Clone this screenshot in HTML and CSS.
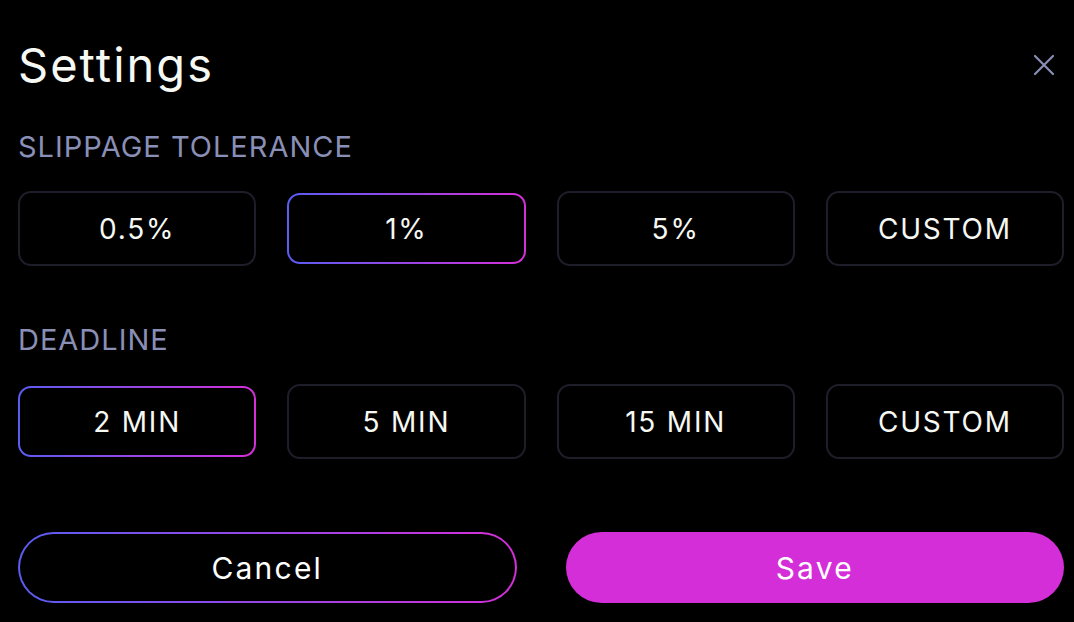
FILE: index.html
```html
<!DOCTYPE html>
<html lang="en">
  <head>
    <meta charset="UTF-8" />
    <title>Settings</title>
    <link rel="stylesheet" href="styles.css">
  </head>
  <body>
    <div class="settings">
      <div class="settings-header">
        <h1>Settings</h1>
        <button class="close-btn" type="button" aria-label="Close">
          <svg width="24" height="24" viewBox="0 0 24 24">
            <path d="M3 3 L21 21 M21 3 L3 21" stroke="#8a8fb6" stroke-width="2.2" stroke-linecap="round" />
          </svg>
        </button>
      </div>

      <!-- Slippage -->
      <div class="section">
        <div class="section-label">SLIPPAGE TOLERANCE</div>
        <div class="options">
          <button class="option">0.5%</button>
          <button class="option selected">1%</button>
          <button class="option">5%</button>
          <button class="option">CUSTOM</button>
        </div>
      </div>

      <!-- Deadline -->
      <div class="section">
        <div class="section-label">DEADLINE</div>
        <div class="options">
          <button class="option selected">2 MIN</button>
          <button class="option">5 MIN</button>
          <button class="option">15 MIN</button>
          <button class="option">CUSTOM</button>
        </div>
      </div>

      <!-- Actions -->
      <div class="actions">
        <button class="btn-cancel" type="button">Cancel</button>
        <button class="btn-save" type="button">Save</button>
      </div>
    </div>
  </body>
</html>
```

FILE: styles.css
```css
body {
  margin: 0;
  background: #000;
  font-family: Inter, "Open Sans", sans-serif;
  color: #f6f8f3;
}

.settings {
  padding: 34px 10px 0 18px;
}

.settings-header {
  display: flex;
  justify-content: space-between;
  align-items: center;
  height: 60px;
}

.settings-header h1 {
  margin: 0;
  font-size: 47px;
  font-weight: 400;
  letter-spacing: 2px;
}

.close-btn {
  background: none;
  border: none;
  padding: 0;
  margin-right: 8px;
  margin-top: 4px;
  cursor: pointer;
}

.section {
  margin-top: 36px;
}

.section + .section {
  margin-top: 57px;
}

.section-label {
  font-size: 29px;
  color: #8a8fb6;
  letter-spacing: 1px;
  line-height: 34px;
}

.option {
  height: 75px;
  background: #000;
  border: 2px solid #1d1e29;
  border-radius: 13px;
  color: #f6f8f3;
  font-family: inherit;
  font-size: 28px;
  letter-spacing: 1.8px;
  cursor: pointer;
}

.options {
  display: grid;
  grid-template-columns: repeat(4, 1fr);
  gap: 31px;
  margin-top: 27px;
}

.option.selected {
  height: 71px;
  margin: 2px 0;
  border: 2px solid transparent;
  background:
    linear-gradient(#000, #000) padding-box,
    linear-gradient(90deg, #5b5df2, #d52fd8) border-box;
}

.actions {
  display: grid;
  grid-template-columns: 1fr 1fr;
  gap: 49px;
  margin-top: 73px;
}

.actions button {
  height: 71px;
  border-radius: 36px;
  font-family: inherit;
  font-size: 30px;
  letter-spacing: 2.2px;
  color: #fff;
  cursor: pointer;
}

.btn-cancel {
  border: 2px solid transparent;
  background:
    linear-gradient(#000, #000) padding-box,
    linear-gradient(90deg, #5b5df2, #d52fd8) border-box;
}

.btn-save {
  border: none;
  background: #d42ed8;
}
```
